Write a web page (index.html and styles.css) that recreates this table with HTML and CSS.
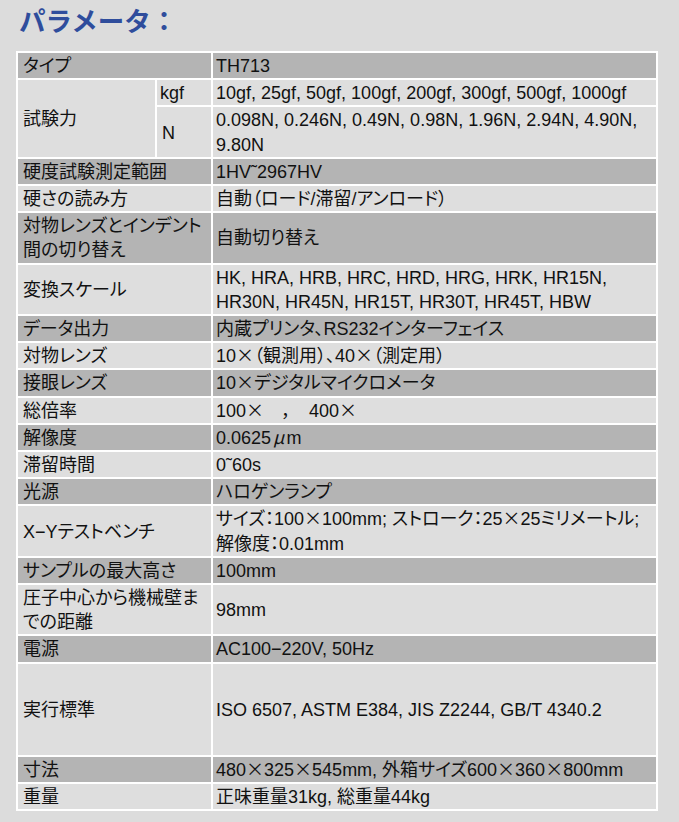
FILE: index.html
```html
<!DOCTYPE html>
<html lang="ja">
<head>
<meta charset="utf-8">
<title>パラメータ</title>
<link rel="stylesheet" href="styles.css">
</head>
<body>
<div class="page">
  <h1 class="title">パラメータ：</h1>
  <table class="spec">
    <colgroup>
      <col class="c1">
      <col class="c2">
      <col class="c3">
    </colgroup>
    <tbody>
      <tr class="d"><td colspan="2">タイプ</td><td>TH713</td></tr>
      <tr><td rowspan="2">試験力</td><td>kgf</td><td>10gf, 25gf, 50gf, 100gf, 200gf, 300gf, 500gf, 1000gf</td></tr>
      <tr><td>N</td><td>0.098N, 0.246N, 0.49N, 0.98N, 1.96N, 2.94N, 4.90N,<br>9.80N</td></tr>
      <tr class="d"><td colspan="2">硬度試験測定範囲</td><td>1HV˜2967HV</td></tr>
      <tr><td colspan="2">硬さの読み方</td><td>自動（ロード/滞留/アンロード）</td></tr>
      <tr class="d"><td colspan="2">対物レンズとインデント<br>間の切り替え</td><td>自動切り替え</td></tr>
      <tr><td colspan="2">変換スケール</td><td>HK, HRA, HRB, HRC, HRD, HRG, HRK, HR15N,<br>HR30N, HR45N, HR15T, HR30T, HR45T, HBW</td></tr>
      <tr class="d"><td colspan="2">データ出力</td><td>内蔵プリンタ、RS232インターフェイス</td></tr>
      <tr><td colspan="2">対物レンズ</td><td>10<span class="j">×（観測用）、</span>40<span class="j">×（測定用）</span></td></tr>
      <tr class="d"><td colspan="2">接眼レンズ</td><td>10<span class="j">×</span>デジタルマイクロメータ</td></tr>
      <tr><td colspan="2">総倍率</td><td>100<span class="j">×　，　</span>400<span class="j">×</span></td></tr>
      <tr class="d"><td colspan="2">解像度</td><td>0.0625<span class="mu">μ</span>m</td></tr>
      <tr><td colspan="2">滞留時間</td><td>0˜60s</td></tr>
      <tr class="d"><td colspan="2">光源</td><td>ハロゲンランプ</td></tr>
      <tr><td colspan="2">X−Yテストベンチ</td><td>サイズ：100<span class="j">×</span>100mm; ストローク：25<span class="j">×</span>25ミリメートル;<br>解像度：0.01mm</td></tr>
      <tr class="d"><td colspan="2">サンプルの最大高さ</td><td>100mm</td></tr>
      <tr><td colspan="2">圧子中心から機械壁ま<br>での距離</td><td>98mm</td></tr>
      <tr class="d"><td colspan="2">電源</td><td>AC100−220V, 50Hz</td></tr>
      <tr class="tall"><td colspan="2">実行標準</td><td>ISO 6507, ASTM E384, JIS Z2244, GB/T 4340.2</td></tr>
      <tr class="d"><td colspan="2">寸法</td><td>480<span class="j">×</span>325<span class="j">×</span>545mm, 外箱サイズ600<span class="j">×</span>360<span class="j">×</span>800mm</td></tr>
      <tr><td colspan="2">重量</td><td>正味重量31kg, 総重量44kg</td></tr>
    </tbody>
  </table>
</div>
</body>
</html>
```
FILE: styles.css
```css
html, body {
  margin: 0;
  padding: 0;
  background: #dcdcdc;
}

.page {
  padding: 0 0 12px 16px;
}

.title {
  margin: 0 0 12px 3px;
  font-family: "Noto Sans CJK JP", sans-serif;
  font-size: 26.5px;
  font-weight: 700;
  line-height: 39px;
  color: #2f4d9c;
  letter-spacing: 0;
}

.spec {
  width: 640px;
  table-layout: fixed;
  border-collapse: collapse;
  border: 2px solid #ffffff;
  font-family: "Liberation Sans", "Noto Sans CJK JP", sans-serif;
  font-size: 18px;
  color: #111111;
  font-feature-settings: "palt";
}

.c1 { width: 139px; }
.c2 { width: 56px; }
.c3 { width: 445px; }

.spec td {
  border: 2px solid #ffffff;
  background: #dedede;
  padding: 1px 3px 0 5px;
  line-height: 24.2px;
  vertical-align: middle;
  white-space: nowrap;
  overflow: hidden;
}

.spec td + td {
  padding-left: 3px;
}

.spec tr.d td {
  background: #b4b4b4;
}

.spec tr.tall td {
  height: 90px;
}

.j {
  font-family: "Noto Sans CJK JP", sans-serif;
  line-height: 1;
}

.mu {
  font-family: "Noto Sans CJK JP", sans-serif;
  font-style: italic;
  line-height: 1;
  padding: 0 2px;
}
```
